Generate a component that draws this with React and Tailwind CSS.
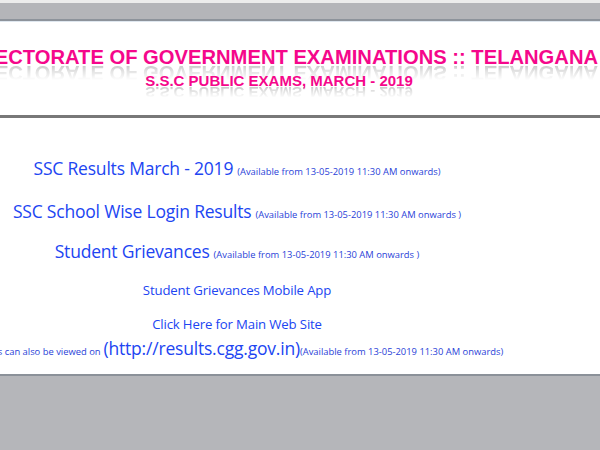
const avail = '(Available from 13-05-2019 11:30 AM onwards)';

function Reflected({ children, className }) {
  // gray mirrored copy under the pink heading text
  return (
    <span className={`relative inline-block ${className}`}>
      <span className="relative z-10">{children}</span>
      <span
        aria-hidden="true"
        className="absolute left-0 top-[78%] text-[#acacac] scale-y-[-1] blur-[0.7px] [mask-image:linear-gradient(to_top,rgba(0,0,0,0.8),rgba(0,0,0,0.35)_40%,rgba(0,0,0,0)_85%)]"
      >
        {children}
      </span>
    </span>
  );
}

export default function App() {
  return (
    <div className="w-[600px] h-[450px] overflow-hidden bg-[#b5b6ba] font-['Open_Sans',sans-serif]">
      {/* top bar */}
      <div className="h-[3px] bg-[#ececec]" />
      <div className="h-[16px] bg-[#b4b5b9]" />
      <div className="h-[2px] bg-[#8d939b]" />
      <div className="h-px bg-[#dfe7ef]" />

      {/* heading */}
      <div className="h-[93px] bg-white pr-[42px] pt-[25px] font-['Liberation_Sans',Arial,sans-serif] font-bold text-[#f5078b]">
        <div className="flex justify-center whitespace-nowrap text-[20.2px] leading-[20px]">
          <Reflected>DIRECTORATE OF GOVERNMENT EXAMINATIONS :: TELANGANA</Reflected>
        </div>
        <div className="mt-[6px] flex justify-center whitespace-nowrap text-[15px] leading-[15px]">
          <Reflected>S.S.C PUBLIC EXAMS, MARCH - 2019</Reflected>
        </div>
      </div>
      <div className="h-[3px] bg-[#787878]" />

      {/* links */}
      <div className="h-[256px] bg-white pr-[126px] pt-[38px] text-[#2145f2]">
        <div className="flex items-baseline justify-center whitespace-nowrap">
          <a className="text-[17.5px] leading-[24px] tracking-[-0.2px]">SSC Results March - 2019</a>
          <span className="ml-[4px] text-[9.4px] text-[#2a3fd8]">{avail}</span>
        </div>
        <div className="mt-[19px] flex items-baseline justify-center whitespace-nowrap">
          <a className="text-[17.5px] leading-[24px] tracking-[-0.2px]">SSC School Wise Login Results</a>
          <span className="ml-[4px] text-[9.4px] text-[#2a3fd8]">(Available from 13-05-2019 11:30 AM onwards )</span>
        </div>
        <div className="mt-[16px] flex items-baseline justify-center whitespace-nowrap">
          <a className="text-[17.5px] leading-[24px] tracking-[-0.2px]">Student Grievances</a>
          <span className="ml-[4px] text-[9.4px] text-[#2a3fd8]">(Available from 13-05-2019 11:30 AM onwards )</span>
        </div>
        <div className="mt-[16.7px] flex justify-center whitespace-nowrap">
          <a className="text-[13.2px] leading-[20px] tracking-[-0.15px]">Student Grievances Mobile App</a>
        </div>
        <div className="mt-[14px] flex justify-center whitespace-nowrap">
          <a className="text-[13.2px] leading-[20px] tracking-[-0.15px]">Click Here for Main Web Site</a>
        </div>
        <div className="mt-[2.3px] flex items-baseline justify-center whitespace-nowrap text-[#2a3fd8]">
          <span className="text-[9.4px]">Results can also be viewed on </span>
          <a className="ml-[3px] text-[17.5px] leading-[24px] tracking-[-0.2px] text-[#2145f2]">(http://results.cgg.gov.in)</a>
          <span className="text-[9.4px]">{avail}</span>
        </div>
      </div>
      <div className="h-[2px] bg-[#8b9199]" />
    </div>
  );
}
